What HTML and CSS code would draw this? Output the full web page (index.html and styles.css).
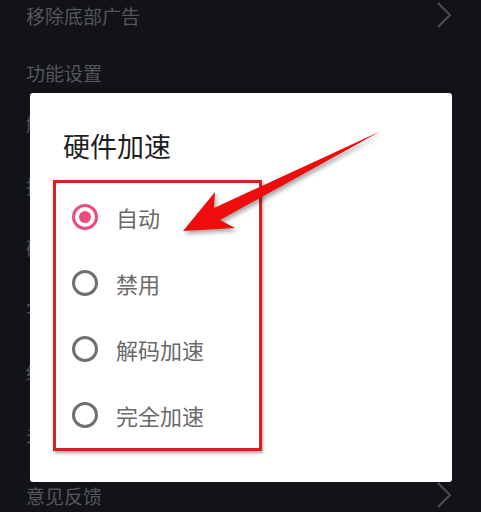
FILE: index.html
```html
<!DOCTYPE html>
<html lang="zh-CN">
<head>
<meta charset="utf-8">
<link rel="stylesheet" href="styles.css">
</head>
<body>
<div class="page">
  <div class="row first">
    <span class="label">移除底部广告</span>
    <svg class="chev" viewBox="0 0 16 28" width="16" height="28"><path d="M2 2 L14 14 L2 26" fill="none" stroke="#4c4d52" stroke-width="2"/></svg>
  </div>
  <div class="section">功能设置</div>
  <div class="row item"><span class="label">解码</span></div>
  <div class="row item"><span class="label">播放</span></div>
  <div class="row item"><span class="label">硬件</span></div>
  <div class="row item"><span class="label">字幕</span></div>
  <div class="row item"><span class="label">缓存</span></div>
  <div class="row item"><span class="label">关于</span></div>
  <div class="row item">
    <span class="label">意见反馈</span>
    <svg class="chev" viewBox="0 0 16 28" width="16" height="28"><path d="M2 2 L14 14 L2 26" fill="none" stroke="#4c4d52" stroke-width="2"/></svg>
  </div>

  <div class="dialog">
    <div class="title">硬件加速</div>
    <div class="options">
      <div class="option"><span class="radio on"></span><span class="opt-text">自动</span></div>
      <div class="option"><span class="radio"></span><span class="opt-text">禁用</span></div>
      <div class="option"><span class="radio"></span><span class="opt-text">解码加速</span></div>
      <div class="option"><span class="radio"></span><span class="opt-text">完全加速</span></div>
    </div>
  </div>

  <svg class="arrow" viewBox="0 0 481 512" width="481" height="512">
    <polygon points="183,231 215,192 214,208 381,131 220,220 235,228" fill="#ee0c0c"/>
  </svg>
</div>
</body>
</html>
```
FILE: styles.css
```css
html, body {
  margin: 0;
  padding: 0;
}
body {
  background: #121318;
  font-family: "Noto Sans CJK SC", "Noto Sans", sans-serif;
  width: 481px;
  height: 512px;
  overflow: hidden;
}
.page {
  position: relative;
  width: 481px;
  height: 512px;
  display: flex;
  flex-direction: column;
}
.row {
  display: flex;
  align-items: center;
  justify-content: space-between;
  padding: 0 29px 0 26px;
  flex: none;
}
.row.first {
  height: 30px;
}
.row.item {
  height: 62px;
}
.row.item:nth-child(3) {
  margin-top: 5px;
}
.label {
  font-size: 19px;
  color: #55565b;
  line-height: 1;
}
.section {
  height: 30px;
  margin-top: 27px;
  padding-left: 26px;
  font-size: 19px;
  color: #55565b;
  display: flex;
  align-items: center;
  flex: none;
}
.chev {
  display: block;
}
.dialog {
  position: absolute;
  left: 30px;
  top: 93px;
  width: 422px;
  height: 389px;
  background: #ffffff;
  border-radius: 3px;
  box-sizing: border-box;
  padding: 37px 0 0 23px;
}
.title {
  font-size: 27px;
  line-height: 32px;
  color: #1e1e1e;
  padding-left: 10px;
  margin-bottom: 18px;
}
.options {
  width: 209px;
  box-sizing: border-box;
  border: 3px solid #d81f26;
  box-shadow: 1px 2px 3px rgba(0, 0, 0, 0.35);
  padding-top: 1px;
}
.option {
  height: 66px;
  display: flex;
  align-items: center;
  padding-left: 16px;
}
.radio {
  width: 26px;
  height: 26px;
  box-sizing: border-box;
  border: 3px solid #707070;
  border-radius: 50%;
  flex: none;
  display: flex;
  align-items: center;
  justify-content: center;
}
.radio.on {
  border-color: #ea4c7c;
}
.radio.on::after {
  content: "";
  width: 12px;
  height: 12px;
  border-radius: 50%;
  background: #ea4c7c;
}
.opt-text {
  margin-left: 18px;
  font-size: 22px;
  color: #6a6a6a;
  line-height: 1;
}
.arrow {
  position: absolute;
  left: 0;
  top: 0;
  filter: drop-shadow(2px 3px 2px rgba(0, 0, 0, 0.35));
  pointer-events: none;
}
```
